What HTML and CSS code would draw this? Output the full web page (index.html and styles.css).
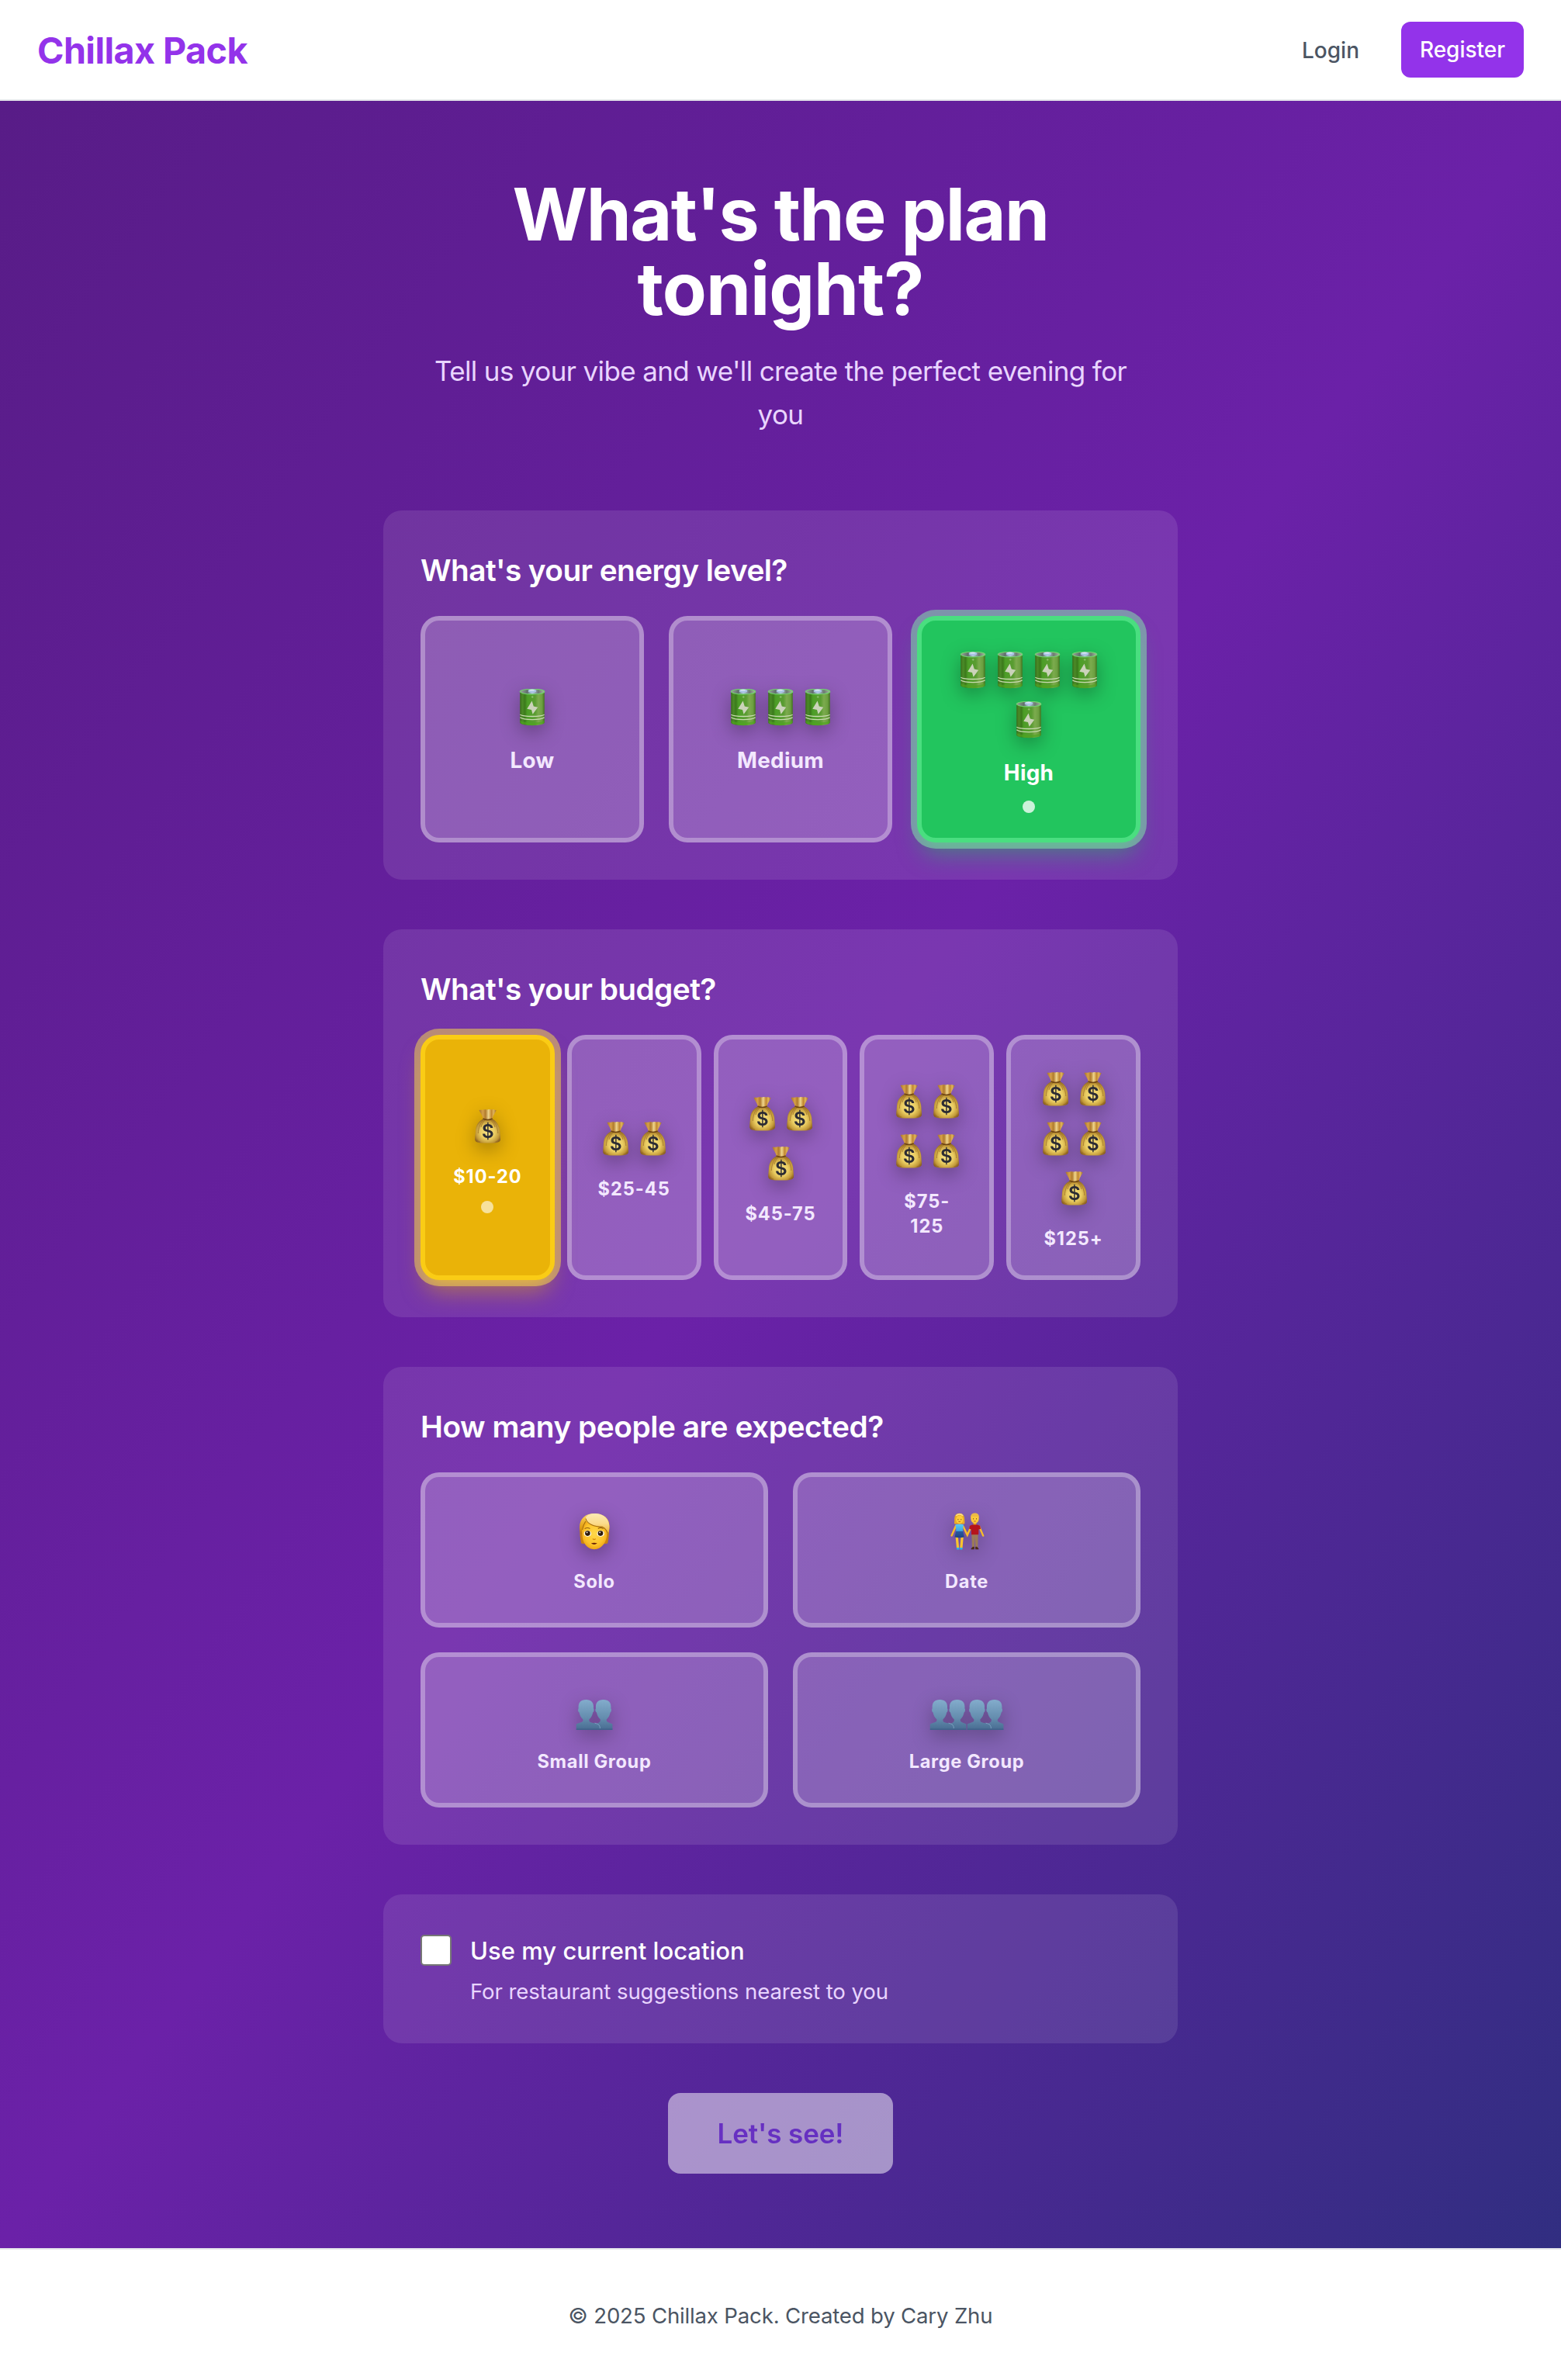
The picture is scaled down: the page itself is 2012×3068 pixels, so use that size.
FILE: index.html
```html
<!DOCTYPE html>
<html lang="en">
<head>
<meta charset="utf-8">
<title>Chillax Pack</title>
<link rel="stylesheet" href="styles.css">
</head>
<body>
<svg class="paints" width="0" height="0" aria-hidden="true">
  <defs>
    <linearGradient id="cell" x1="0" x2="1" y1="0" y2="0">
      <stop offset="0" stop-color="#3b6d1c"/><stop offset=".1" stop-color="#4b8a28"/><stop offset=".2" stop-color="#3c7a1c"/><stop offset=".3" stop-color="#4c9e27"/><stop offset=".62" stop-color="#5a9c32"/><stop offset=".75" stop-color="#7cab4e"/><stop offset=".9" stop-color="#6c9f40"/><stop offset="1" stop-color="#42731f"/>
    </linearGradient>
    <linearGradient id="rim" x1="0" x2="1" y1="0" y2="0">
      <stop offset="0" stop-color="#9aa79a"/><stop offset=".3" stop-color="#5f6f6b"/><stop offset=".5" stop-color="#b7cbe6"/><stop offset=".75" stop-color="#6b7a70"/><stop offset="1" stop-color="#a9b9a2"/>
    </linearGradient>
    <radialGradient id="sack" cx=".5" cy=".55" r=".58">
      <stop offset="0" stop-color="#f7e284"/><stop offset=".5" stop-color="#e9cb60"/><stop offset=".8" stop-color="#c39a39"/><stop offset="1" stop-color="#8a5f1f"/>
    </radialGradient>
    <linearGradient id="ruffle" x1="0" x2="1" y1="0" y2="0">
      <stop offset="0" stop-color="#a8742a"/><stop offset=".22" stop-color="#d6a047"/><stop offset=".38" stop-color="#b07a2c"/><stop offset=".55" stop-color="#efd58c"/><stop offset=".72" stop-color="#c2872f"/><stop offset=".85" stop-color="#e0b55c"/><stop offset="1" stop-color="#a06c28"/>
    </linearGradient>
    <linearGradient id="bust" x1="0" x2="0" y1="0" y2="1">
      <stop offset="0" stop-color="#83accc"/><stop offset=".6" stop-color="#648dae"/><stop offset="1" stop-color="#476b91"/>
    </linearGradient>
    <linearGradient id="hair" x1="0" x2="0" y1="0" y2="1">
      <stop offset="0" stop-color="#fbdc8c"/><stop offset=".25" stop-color="#f6c23f"/><stop offset=".7" stop-color="#dd9a12"/><stop offset="1" stop-color="#b9750c"/>
    </linearGradient>
    <radialGradient id="skin" cx=".5" cy=".45" r=".6">
      <stop offset="0" stop-color="#ffd84a"/><stop offset=".65" stop-color="#fdc32a"/><stop offset="1" stop-color="#e99c10"/>
    </radialGradient>
    <linearGradient id="fringe" x1="0" x2="0" y1="0" y2="1">
      <stop offset="0" stop-color="#fde9b4"/><stop offset=".5" stop-color="#fbdb8a"/><stop offset="1" stop-color="#efb02b"/>
    </linearGradient>
    <linearGradient id="dress" x1="0" x2="0" y1="0" y2="1">
      <stop offset="0" stop-color="#58cdf5"/><stop offset=".5" stop-color="#3fa6e2"/><stop offset=".56" stop-color="#2759a2"/><stop offset="1" stop-color="#1f4482"/>
    </linearGradient>
  </defs>
</svg>
<svg class="symbols" aria-hidden="true">
  <symbol id="battery" viewBox="0 0 48 48">
    <path d="M8.2 3.6V43.6C8.2 48.4 39.8 48.4 39.8 43.6V3.6Z" fill="url(#cell)"/>
    <path d="M8.6 40.5C10 44.5 38 44.5 39.4 40.5V43.6C39 47.6 9 47.6 8.6 43.6Z" fill="#4fa61e" opacity=".65"/>
    <ellipse cx="24" cy="3.6" rx="15.8" ry="3.3" fill="url(#rim)" stroke="#72d36f" stroke-width="1.1"/>
    <ellipse cx="24" cy="2.7" rx="5.2" ry="2.1" fill="#a9c4e6"/>
    <ellipse cx="23.6" cy="1.8" rx="3.4" ry="1" fill="#d5e2f2"/>
    <path d="M24.2 8.9V11.9M22.8 10.4H25.6" stroke="#8fc274" stroke-width=".9"/>
    <path d="M23.6 15.4L25.8 22.4L31.2 23.8L24.6 32.8L23 27L17.3 25.8Z" fill="#cbd3ba"/>
    <path d="M8.4 33.3C13 36.2 35 36.2 39.6 33.3M8.4 36.8C13 40.6 35 40.6 39.6 36.8" fill="none" stroke="#c9dbb2" stroke-width="1.3"/>
  </symbol>
  <symbol id="bag" viewBox="0 0 48 48">
    <path d="M18.8 14.3C12 18 9.6 23 9 29.5C8.8 34 8.1 37 8.2 41C8.4 45 14 45.6 24.7 45.6C35 45.6 40.6 45.2 41 41C41.1 37 40.5 34 40.3 29.5C39.6 23 36.5 17.6 30.4 14.3Z" fill="url(#sack)"/>
    <path d="M19 16C15 20 12.5 26 12.3 33M21 16C18 19 16.5 22 16 25M28.5 16C32 19 33.5 22 34 25M30.5 16C35 20 37.5 26 37.8 33M10.5 41C11.5 43 13 43.8 15 44M38.8 41C38 43 36.5 43.8 34.5 44" fill="none" stroke="#936622" stroke-width="1" opacity=".65"/>
    <path d="M13.5 3.1C16 2.2 17.5 3.4 19.6 2.3C21.5 1.8 23 2.8 25.4 2.2C27.5 1.7 29 2.8 31 2.3C33 2 34.5 3.4 35.6 2.9C34.6 6.3 31.6 9 30.6 14C27 15.6 22 15.6 18.8 14C17.5 9.5 14.8 6.5 13.5 3.1Z" fill="url(#ruffle)"/>
    <path d="M18.6 14C22 15.7 27 15.7 30.7 14" fill="none" stroke="#6e4512" stroke-width="1.5"/>
    <text x="24.7" y="39.4" text-anchor="middle" class="coin">$</text>
  </symbol>
  <symbol id="pair" viewBox="0 0 48 48">
    <path d="M25.6 48V41C28 39 31.6 38.6 31.8 36V34.4C29.2 32 27.6 29 27 25.4C25.2 24.8 25 21 26 20.5C25.2 12.4 29.2 9 35.7 9C42.2 9 46.2 12.4 45.4 20.5C46.4 21 46.2 24.8 44.6 25.4C44 29 42.4 32 39.8 34.4V36C40 38.6 44.8 38.6 47.4 40.6V48Z" fill="url(#bust)"/>
    <path d="M.8 48V40.6C3.5 38.6 9.2 38.6 9.4 36V34.4C6.8 32 5.2 29 4.6 25.4C2.9 24.8 2.7 21 3.7 20.5C2.9 12.4 6.8 9 13.3 9C19.8 9 23.8 12.4 23 20.5C24 21 23.8 24.8 22.2 25.4C21.6 29 20 32 17.4 34.4V36C17.6 39.6 26 38.6 29.6 41C31 42.2 31.4 44.5 31.4 48Z" fill="url(#bust)"/>
    <path d="M24.6 39.2C29.5 40.2 31.2 42 31.4 46" fill="none" stroke="#86aecb" stroke-width=".8"/>
    <path d="M.8 47.2H47.4" stroke="#3e6088" stroke-width="1.2"/>
  </symbol>
  <symbol id="person" viewBox="0 0 48 48">
    <path d="M6 20C4.6 27 6 33 7.2 39.5L11 40.2V20ZM42.2 20C43.6 27 42.4 33 41.2 39.5L37 40.2V20Z" fill="#c9830f"/>
    <path d="M24 1C12 1 5 8 5 19C5 23 6 27 8 28H40C42.6 26 43.6 22 43.5 17C43 7 36 1 24 1Z" fill="url(#hair)"/>
    <path d="M8.2 23C8 16 12 11 16 10.5C24 17 36 14 39.8 23C41.2 27.5 40 35 36.6 40C33 45 28.5 47.2 24 47.2C19.5 47.2 15 45 11.6 40C8.6 35 8.2 28 8.2 23Z" fill="url(#skin)"/>
    <path d="M13.3 5.6C17 1.6 22.5 .8 27 1.2C37 2 43.4 8.5 43.4 18C43.4 22 42.8 25 41.6 27C40.5 22.8 37.8 19.6 34.5 18.2C24 17.8 14.5 14.5 12.6 8.6Z" fill="url(#fringe)"/>
    <path d="M13 7.5C14.5 14.5 24 18 34.5 18.4C38 20 40 22.8 41 26M12.8 11C10.8 14 9.4 18 8.6 22" fill="none" stroke="#a56c0c" stroke-width="1.1"/>
    <path d="M11.6 20.6Q15 18.6 18.4 20.4M28.8 20.4Q32.2 18.6 35.6 20.6" fill="none" stroke="#8f5c10" stroke-width="1.1"/>
    <ellipse cx="15.4" cy="27" rx="4.8" ry="3.9" fill="#fff8e4"/><ellipse cx="32.2" cy="27" rx="4.8" ry="3.9" fill="#fff8e4"/>
    <circle cx="15.4" cy="26.6" r="3.3" fill="#2d1a0a"/><circle cx="32" cy="26.6" r="3.3" fill="#2d1a0a"/>
    <circle cx="14.6" cy="25.4" r=".9" fill="#fff"/><circle cx="31.2" cy="25.4" r=".9" fill="#fff"/>
    <path d="M21.8 33.6Q23.8 35.4 25.8 33.6" fill="none" stroke="#cf850c" stroke-width="1.2"/>
    <path d="M19.8 39.2Q23.8 38.2 27.8 39.2Q23.8 42.6 19.8 39.2Z" fill="#6b2408"/>
  </symbol>
  <symbol id="couple" viewBox="0 0 48 48">
    <path d="M11.2 31L12.6 45.5M18.2 31L16.9 45.5" stroke="#fcc52e" stroke-width="3.2"/>
    <path d="M12.7 45V47.4M16.9 45V47.4" stroke="#2db4e8" stroke-width="3.2"/>
    <path d="M10 17L4.6 29.4M19.4 17.5L24.8 28.8L29.6 18M40 17.5L45.2 29.6" fill="none" stroke="#f8bd28" stroke-width="2.4" stroke-linecap="round"/>
    <path d="M9.4 15.4Q14.7 13.8 20 15.4L19 22.5L20.8 31.5Q14.7 32.8 8.4 31.5L10.4 22.5Z" fill="url(#dress)"/>
    <path d="M14.7 .8C9.4 .8 8.2 5 8.2 9C8.2 12.5 7.6 13.4 8.6 14.6H20.8C21.8 13.4 21.4 12 21.2 9C21.2 4.6 19.6 .8 14.7 .8Z" fill="#e9ac25"/>
    <path d="M10.4 4C12 1.4 17 1 19 4" fill="none" stroke="#fbdc86" stroke-width="1.6"/>
    <ellipse cx="14.8" cy="8.8" rx="4.6" ry="5.4" fill="#fdcb3a"/>
    <path d="M30.3 27.5H38.7L38.3 46H35.4L34.6 31L33.8 46H31Z" fill="#9b7a58"/>
    <path d="M29.6 46.6Q31.5 42.8 33.8 44V47.2H29.6ZM35.2 44Q37.8 42.8 39.4 46.6V47.2H35.2Z" fill="#4a2a17"/>
    <path d="M28 16.8Q34.4 13.2 41.2 16.8L42 21L39.4 21.6L39.2 28.2H30L29.8 21.6L27.2 20.8Z" fill="#b5141c"/>
    <path d="M32.6 12H36.4V15.4H32.6Z" fill="#e9a81c"/>
    <ellipse cx="34.5" cy="7.6" rx="5.2" ry="6.2" fill="#fdcb3a"/>
    <path d="M29.1 7.5C28.6 3 30.6 .6 34.6 .6C38.6 .6 40.4 3 39.9 7.5L38.8 4.8Q34.5 5.6 30.2 4.8Z" fill="#edbb44"/>
    <path d="M12.9 8.3V9.3M16.8 8.3V9.3M32.6 7.4V8.4M36.5 7.4V8.4" stroke="#4a2a12" stroke-width="1"/>
    <path d="M13.4 11.6H16.2M33.2 11H35.8" stroke="#b5501a" stroke-width=".8"/>
  </symbol>
</svg>

<header class="navbar">
  <a class="brand">Chillax Pack</a>
  <nav class="links">
    <a class="login">Login</a>
    <a class="register">Register</a>
  </nav>
</header>

<main class="planner">
  <div class="intro">
    <h1>What's the plan<br><span class="second">tonight?</span></h1>
    <p>Tell us your vibe and we'll create the perfect evening for<br>you</p>
  </div>

  <section class="card">
    <h2>What's your energy level?</h2>
    <div class="options energy">
      <button class="option">
        <span class="icons"><svg><use href="#battery"/></svg></span>
        <span class="label large">Low</span>
      </button>
      <button class="option">
        <span class="icons"><svg><use href="#battery"/></svg><svg><use href="#battery"/></svg><svg><use href="#battery"/></svg></span>
        <span class="label large">Medium</span>
      </button>
      <button class="option green">
        <span class="icons"><svg><use href="#battery"/></svg><svg><use href="#battery"/></svg><svg><use href="#battery"/></svg><svg><use href="#battery"/></svg><svg><use href="#battery"/></svg></span>
        <span class="label large">High</span>
        <span class="dot"></span>
      </button>
    </div>
  </section>

  <section class="card">
    <h2>What's your budget?</h2>
    <div class="options budget">
      <button class="option yellow">
        <span class="icons"><svg><use href="#bag"/></svg></span>
        <span class="label price">$10-20</span>
        <span class="dot"></span>
      </button>
      <button class="option">
        <span class="icons"><svg><use href="#bag"/></svg><svg><use href="#bag"/></svg></span>
        <span class="label price">$25-45</span>
      </button>
      <button class="option">
        <span class="icons"><svg><use href="#bag"/></svg><svg><use href="#bag"/></svg><svg><use href="#bag"/></svg></span>
        <span class="label price">$45-75</span>
      </button>
      <button class="option">
        <span class="icons"><svg><use href="#bag"/></svg><svg><use href="#bag"/></svg><svg><use href="#bag"/></svg><svg><use href="#bag"/></svg></span>
        <span class="label price">$75-<br>125</span>
      </button>
      <button class="option">
        <span class="icons"><svg><use href="#bag"/></svg><svg><use href="#bag"/></svg><svg><use href="#bag"/></svg><svg><use href="#bag"/></svg><svg><use href="#bag"/></svg></span>
        <span class="label price">$125+</span>
      </button>
    </div>
  </section>

  <section class="card">
    <h2 class="wide">How many people are expected?</h2>
    <div class="options people">
      <button class="option">
        <span class="icons"><svg><use href="#person"/></svg></span>
        <span class="label">Solo</span>
      </button>
      <button class="option">
        <span class="icons"><svg><use href="#couple"/></svg></span>
        <span class="label">Date</span>
      </button>
      <button class="option">
        <span class="icons"><svg><use href="#pair"/></svg></span>
        <span class="label">Small Group</span>
      </button>
      <button class="option">
        <span class="icons"><svg><use href="#pair"/></svg><svg><use href="#pair"/></svg></span>
        <span class="label">Large Group</span>
      </button>
    </div>
  </section>

  <section class="card location">
    <input type="checkbox" id="loc" class="check">
    <div>
      <label for="loc">Use my current location</label>
      <p>For restaurant suggestions nearest to you</p>
    </div>
  </section>

  <button class="submit" disabled>Let's see!</button>
</main>

<footer class="footer">© 2025 Chillax Pack. Created by Cary Zhu</footer>
</body>
</html>
```
FILE: styles.css
```css
* { box-sizing: border-box; margin: 0; padding: 0; }

body {
  font-family: Inter, "Liberation Sans", sans-serif;
  background: #fff;
}

button { font: inherit; border: 0; }
.paints { position: absolute; }
.symbols { display: none; }

.navbar {
  display: flex;
  align-items: center;
  justify-content: space-between;
  height: 130px;
  padding: 0 48px;
  border-bottom: 2px solid #e5e7eb;
}
.brand {
  padding-top: 1px;
  font-size: 46.6px;
  line-height: 64px;
  font-weight: 700;
  letter-spacing: -.55px;
  color: #9333ea;
}
.links {
  display: flex;
  align-items: center;
  gap: 32px;
  font-size: 28px;
  line-height: 40px;
  font-weight: 500;
  letter-spacing: 0;
}
.login { padding: 17px 22px 15px 24px; color: #4b5563; }
.register {
  width: 158px;
  padding: 16px 0;
  border-radius: 12px;
  background: #9333ea;
  color: #fff;
  text-align: center;
}

.planner {
  display: flex;
  flex-direction: column;
  align-items: center;
  gap: 64px;
  height: 2768px;
  padding-top: 96px;
  background: linear-gradient(to bottom right, #581c87, #6b21a8, #312e81);
}
.intro {
  margin-bottom: 32px;
  text-align: center;
}
.intro h1 {
  padding-top: 2px;
  font-size: 93.2px;
  line-height: 96px;
  font-weight: 700;
  letter-spacing: -1.55px;
  color: #fff;
}
.intro .second { letter-spacing: -1px; }
.intro p {
  margin-top: 30px;
  font-size: 35px;
  line-height: 56px;
  letter-spacing: -.63px;
  color: #e9d5ff;
}

.card {
  width: 1024px;
  padding: 48px;
  border-radius: 24px;
  background: rgba(255, 255, 255, .1);
}
.card h2 {
  padding-top: 1px;
  margin-bottom: 31px;
  font-size: 38.8px;
  line-height: 56px;
  font-weight: 600;
  letter-spacing: -.57px;
  color: #fff;
}
.card h2.wide { letter-spacing: -.46px; }

.options { display: grid; gap: 32px; }
.energy { grid-template-columns: repeat(3, 1fr); }
.budget { grid-template-columns: repeat(5, 1fr); gap: 16px; }
.people { grid-template-columns: repeat(2, 1fr); }

.option {
  display: flex;
  flex-direction: column;
  align-items: center;
  justify-content: center;
  gap: 16px;
  min-height: 200px;
  padding: 32px;
  border: 6px solid rgba(255, 255, 255, .3);
  border-radius: 24px;
  background: rgba(255, 255, 255, .2);
  color: #f3e8ff;
}
.option.green {
  border-color: #4ade80;
  background: #22c55e;
  color: #fff;
  box-shadow: 0 0 0 8px rgba(134, 239, 172, .5), 0 20px 30px -6px rgba(34, 197, 94, .5), 0 8px 12px -8px rgba(34, 197, 94, .5);
}
.option.yellow {
  border-color: #facc15;
  background: #eab308;
  color: #fff;
  box-shadow: 0 0 0 8px rgba(253, 224, 71, .5), 0 20px 30px -6px rgba(234, 179, 8, .5), 0 8px 12px -8px rgba(234, 179, 8, .5);
}
.icons {
  display: flex;
  flex-wrap: wrap;
  justify-content: center;
  filter: drop-shadow(0 8px 12px rgba(0, 0, 0, .3));
}
.icons svg { width: 48px; height: 48px; margin: 8px 0; }
.coin { font: 600 24px Inter, sans-serif; letter-spacing: 0; fill: #2b2b33; }
.label {
  padding-top: 1px;
  margin-bottom: -1px;
  font-size: 23.6px;
  line-height: 32px;
  font-weight: 650;
  letter-spacing: .65px;
  text-align: center;
}
.label.price { letter-spacing: .95px; }
.label.large { padding-top: 0; margin-bottom: 0; font-size: 27.8px; line-height: 40px; letter-spacing: .3px; }
.dot {
  width: 16px;
  height: 16px;
  border-radius: 50%;
  background: rgba(255, 255, 255, .77);
}
.yellow .dot { background: rgba(255, 255, 255, .6); }

.location { display: flex; gap: 24px; }
.check {
  appearance: none;
  width: 40px;
  height: 40px;
  margin-top: 4px;
  border: 2px solid #767676;
  border-radius: 5px;
  background: #fff;
}
.location label {
  display: block;
  padding-top: 1px;
  font-size: 31px;
  line-height: 48px;
  font-weight: 500;
  letter-spacing: .02px;
  color: #fff;
}
.location p {
  margin-top: 7px;
  padding-top: 1px;
  margin-bottom: -1px;
  font-size: 27.6px;
  line-height: 40px;
  letter-spacing: -.1px;
  color: #e9d5ff;
}

.submit {
  width: 290px;
  height: 104px;
  border-radius: 16px;
  background: #fff;
  color: #7c3aed;
  font-size: 35px;
  line-height: 56px;
  font-weight: 600;
  letter-spacing: -.1px;
  opacity: .5;
}

.footer {
  height: 170px;
  padding: 65px 0 63px;
  border-top: 2px solid #e5e7eb;
  text-align: center;
  font-size: 27.6px;
  line-height: 40px;
  letter-spacing: -.18px;
  color: #4b5563;
}
```
